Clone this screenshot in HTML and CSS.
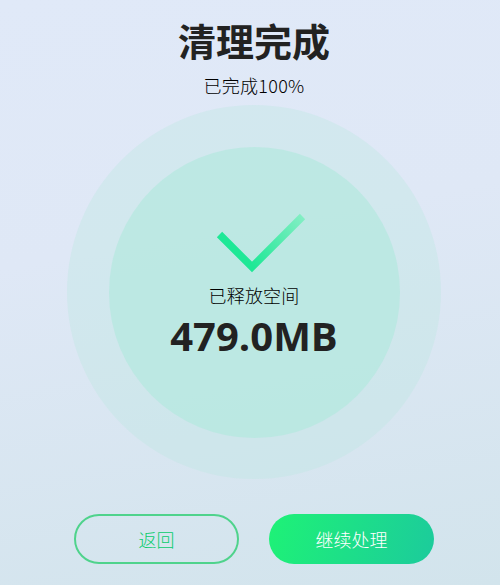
FILE: index.html
```html
<!DOCTYPE html>
<html lang="zh-CN">
<head>
<meta charset="utf-8">
<title>清理完成</title>
<link rel="stylesheet" href="styles.css">
</head>
<body>
<main class="page">
  <h1 class="title">清理完成</h1>
  <p class="subtitle">已完成100%</p>
  <section class="ring">
    <div class="disc">
      <svg class="check" width="96" height="60" viewBox="0 0 96 60" aria-hidden="true">
        <defs>
          <linearGradient id="checkGrad" gradientUnits="userSpaceOnUse" x1="36" y1="50" x2="90" y2="4">
            <stop offset="0" stop-color="#1ee896"/>
            <stop offset="1" stop-color="#84eec4"/>
          </linearGradient>
        </defs>
        <path d="M5.500 21.500 L38 54 L88.500 3.500" fill="none" stroke="url(#checkGrad)" stroke-width="7.500"/>
      </svg>
      <div class="label">已释放空间</div>
      <div class="amount">479.0MB</div>
    </div>
  </section>
  <div class="actions">
    <button class="btn btn-outline" type="button">返回</button>
    <button class="btn btn-solid" type="button">继续处理</button>
  </div>
</main>
</body>
</html>
```
FILE: styles.css
```css
* { box-sizing: border-box; }
html, body { margin: 0; height: 100%; }
body {
  background: linear-gradient(170deg, #e0e9f8 0%, #dfe8f6 40%, #d2e4ec 100%);
  font-family: "Noto Sans CJK SC", "Noto Sans", sans-serif;
  color: #222;
  overflow: hidden;
}
.page {
  height: 585px;
  padding: 13px 0 0 8px;
  display: flex;
  flex-direction: column;
  align-items: center;
}
.title {
  margin: 0;
  font-size: 38px;
  line-height: 54px;
  font-weight: 700;
}
.subtitle {
  margin: 5px 0 0;
  font-size: 18px;
  line-height: 26px;
  font-weight: 300;
  letter-spacing: 0.3px;
  color: #000;
}
.ring {
  margin-top: 7px;
  width: 374px;
  height: 374px;
  border-radius: 50%;
  background: rgba(190, 232, 226, 0.38);
  display: flex;
  align-items: center;
  justify-content: center;
}
.disc {
  width: 291px;
  height: 291px;
  border-radius: 50%;
  background: rgba(177, 232, 222, 0.66);
  display: flex;
  flex-direction: column;
  align-items: center;
  padding-top: 66px;
}
.check { display: block; margin-left: 15px; }
.label {
  margin-top: 9px;
  font-size: 18px;
  line-height: 26px;
  font-weight: 300;
  letter-spacing: 0.2px;
  color: #000;
}
.amount {
  font-family: "Open Sans", "Noto Sans", sans-serif;
  font-size: 40px;
  line-height: 50px;
  font-weight: 700;
  margin-top: 3px;
}
.actions {
  margin-top: 35px;
  display: flex;
  gap: 30px;
}
.btn {
  width: 165px;
  height: 50px;
  border-radius: 25px;
  font-family: inherit;
  font-size: 18px;
  padding: 0;
  font-weight: 300;
}
.btn-outline {
  background: transparent;
  border: 2px solid #4fd38c;
  color: #08cc6c;
}
.btn-solid {
  border: 0;
  background: linear-gradient(105deg, #1ef276 0%, #1ccb9c 100%);
  color: #fff;
}
```
